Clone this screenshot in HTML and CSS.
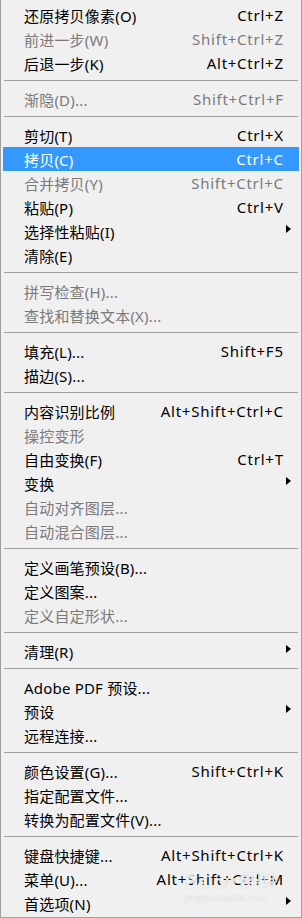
FILE: index.html
```html
<!DOCTYPE html>
<html lang="zh-CN">
<head>
  <meta charset="UTF-8" />
  <title>编辑菜单</title>
  <link rel="stylesheet" href="styles.css">
</head>
<body>
  <div class="menu">
    <div class="item"><span class="label">还原拷贝像素(O)</span><span class="key">Ctrl+Z</span><span class="sub"></span></div>
    <div class="item off"><span class="label">前进一步(W)</span><span class="key">Shift+Ctrl+Z</span><span class="sub"></span></div>
    <div class="item"><span class="label">后退一步(K)</span><span class="key">Alt+Ctrl+Z</span><span class="sub"></span></div>
    <div class="sep"></div>
    <div class="item off"><span class="label">渐隐(D)...</span><span class="key">Shift+Ctrl+F</span><span class="sub"></span></div>
    <div class="sep"></div>
    <div class="item"><span class="label">剪切(T)</span><span class="key">Ctrl+X</span><span class="sub"></span></div>
    <div class="item active"><span class="label">拷贝(C)</span><span class="key">Ctrl+C</span><span class="sub"></span></div>
    <div class="item off"><span class="label">合并拷贝(Y)</span><span class="key">Shift+Ctrl+C</span><span class="sub"></span></div>
    <div class="item"><span class="label">粘贴(P)</span><span class="key">Ctrl+V</span><span class="sub"></span></div>
    <div class="item"><span class="label">选择性粘贴(I)</span><span class="key"></span><span class="sub arrow"></span></div>
    <div class="item"><span class="label">清除(E)</span><span class="key"></span><span class="sub"></span></div>
    <div class="sep"></div>
    <div class="item off"><span class="label">拼写检查(H)...</span><span class="key"></span><span class="sub"></span></div>
    <div class="item off"><span class="label">查找和替换文本(X)...</span><span class="key"></span><span class="sub"></span></div>
    <div class="sep"></div>
    <div class="item"><span class="label">填充(L)...</span><span class="key">Shift+F5</span><span class="sub"></span></div>
    <div class="item"><span class="label">描边(S)...</span><span class="key"></span><span class="sub"></span></div>
    <div class="sep"></div>
    <div class="item"><span class="label">内容识别比例</span><span class="key">Alt+Shift+Ctrl+C</span><span class="sub"></span></div>
    <div class="item off"><span class="label">操控变形</span><span class="key"></span><span class="sub"></span></div>
    <div class="item"><span class="label">自由变换(F)</span><span class="key">Ctrl+T</span><span class="sub"></span></div>
    <div class="item"><span class="label">变换</span><span class="key"></span><span class="sub arrow"></span></div>
    <div class="item off"><span class="label">自动对齐图层...</span><span class="key"></span><span class="sub"></span></div>
    <div class="item off"><span class="label">自动混合图层...</span><span class="key"></span><span class="sub"></span></div>
    <div class="sep"></div>
    <div class="item"><span class="label">定义画笔预设(B)...</span><span class="key"></span><span class="sub"></span></div>
    <div class="item"><span class="label">定义图案...</span><span class="key"></span><span class="sub"></span></div>
    <div class="item off"><span class="label">定义自定形状...</span><span class="key"></span><span class="sub"></span></div>
    <div class="sep"></div>
    <div class="item"><span class="label">清理(R)</span><span class="key"></span><span class="sub arrow"></span></div>
    <div class="sep"></div>
    <div class="item"><span class="label">Adobe PDF 预设...</span><span class="key"></span><span class="sub"></span></div>
    <div class="item"><span class="label">预设</span><span class="key"></span><span class="sub arrow"></span></div>
    <div class="item"><span class="label">远程连接...</span><span class="key"></span><span class="sub"></span></div>
    <div class="sep"></div>
    <div class="item"><span class="label">颜色设置(G)...</span><span class="key">Shift+Ctrl+K</span><span class="sub"></span></div>
    <div class="item"><span class="label">指定配置文件...</span><span class="key"></span><span class="sub"></span></div>
    <div class="item"><span class="label">转换为配置文件(V)...</span><span class="key"></span><span class="sub"></span></div>
    <div class="sep"></div>
    <div class="item"><span class="label">键盘快捷键...</span><span class="key">Alt+Shift+Ctrl+K</span><span class="sub"></span></div>
    <div class="item"><span class="label">菜单(U)...</span><span class="key">Alt+Shift+Ctrl+M</span><span class="sub"></span></div>
    <div class="item"><span class="label">首选项(N)</span><span class="key"></span><span class="sub arrow"></span></div>

    <!-- 水印 -->
    <div class="watermark">
      <div class="wm-brand">Baidu 经验</div>
      <div class="wm-url">jingyan.baidu.com</div>
    </div>
  </div>
</body>
</html>
```

FILE: styles.css
```css
body {
  margin: 0;
  background: #f0f0f0;
  font-family: "Noto Sans", "Noto Sans CJK SC", sans-serif;
  font-size: 15px;
  color: #000;
}
.menu {
  position: relative;
  width: 302px;
  height: 918px;
  box-sizing: border-box;
  padding: 3px 2px 2px 2px;
  background: #f0f0f0;
  border-left: 1px solid #a0a0a0;
  border-right: 1px solid #a0a0a0;
  border-bottom: 1px solid #a0a0a0;
}
.item {
  display: flex;
  align-items: center;
  height: 24px;
  padding-left: 21px;
  white-space: nowrap;
}
.item .label { flex: 1; letter-spacing: 0.2px; }
.item .key {
  text-align: right;
  letter-spacing: 0.75px;
  margin-right: -0.75px;
}
.item .sub {
  width: 16px;
  height: 24px;
  display: flex;
  align-items: center;
}
.item .arrow::before {
  content: "";
  display: block;
  margin-left: 3px;
  margin-top: -5px;
  border-left: 5px solid #000;
  border-top: 4.5px solid transparent;
  border-bottom: 4.5px solid transparent;
}
.item.off { color: #7a7a7a; }
.item.active {
  background: #3399ff;
  color: #fff;
}
.sep {
  height: 12px;
  box-sizing: border-box;
  padding: 5px 1px 0;
}
.sep::before {
  content: "";
  display: block;
  height: 1px;
  background: #a0a0a0;
}
.watermark {
  position: absolute;
  left: 184px;
  top: 872px;
  color: rgba(255, 255, 255, 0.8);
  text-shadow: 0 0 1px rgba(120, 120, 120, 0.4);
  line-height: 1;
  pointer-events: none;
}
.wm-brand {
  font-size: 18px;
  font-weight: bold;
}
.wm-url {
  font-family: "Liberation Serif", serif;
  font-size: 11px;
  margin-top: 2px;
}
```
